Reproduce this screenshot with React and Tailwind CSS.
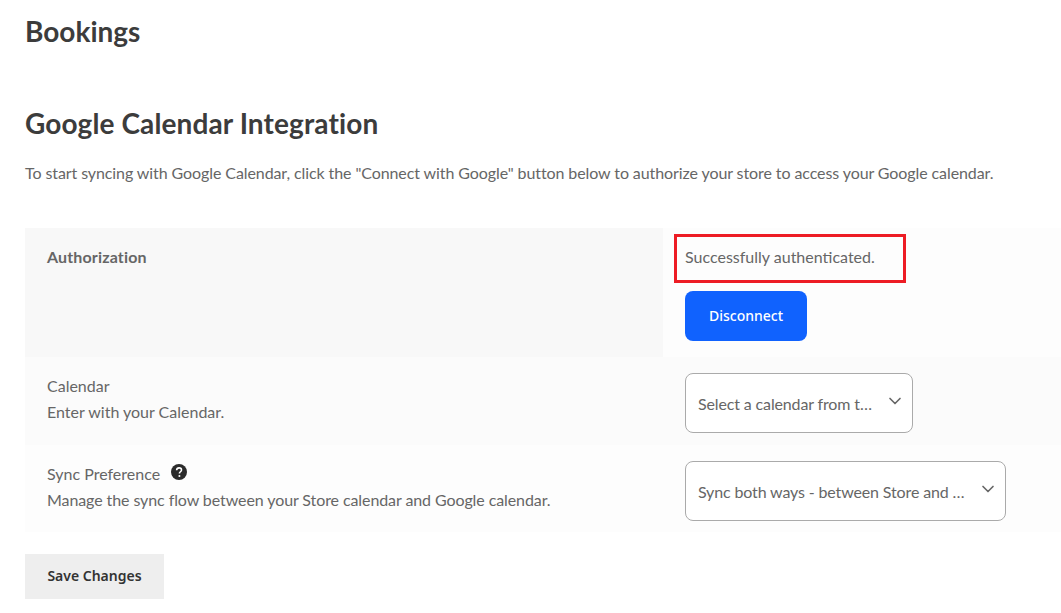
import React from "react";
import { ChevronDown } from "lucide-react";

const Dropdown = ({ label, width }) => (
  <div className={`${width} h-[60px] flex items-center justify-between bg-white border border-[#aaaaaa] rounded-lg pl-3 pr-[7px]`}>
    <span className="truncate text-[16px] tracking-[-0.14px] text-[#666666] mt-[2px]">{label}</span>
    <ChevronDown className="w-[20px] h-[20px] text-[#666666] shrink-0 ml-[6px] -mt-[5px]" strokeWidth={2} />
  </div>
);

const HelpIcon = () => (
  <svg viewBox="0 0 16 16" className="w-[16px] h-[16px] -mt-[5px]">
    <circle cx="8" cy="8" r="8" fill="#2b2b2b" />
    <path d="M5.6 6.2c.1-1.5 1.1-2.3 2.5-2.3 1.4 0 2.4.8 2.4 2 0 .9-.5 1.4-1.2 1.9-.6.4-.8.7-.8 1.3v.3" fill="none" stroke="#ffffff" strokeWidth="1.6" />
    <circle cx="8.4" cy="12" r="1.05" fill="#ffffff" />
  </svg>
);

export default function App() {
  return (
    <div className="min-h-[613px] bg-white pl-[25px] font-['Lato','Liberation_Sans',sans-serif] text-[#666666] relative overflow-hidden">
      <h1 className="text-[28px] leading-[34px] font-bold text-[#3c3c3c] pt-[14px]">Bookings</h1>

      <h2 className="text-[28px] leading-[34px] font-bold tracking-[0.11px] text-[#3c3c3c] mt-[58px]">Google Calendar Integration</h2>
      <p className="text-[16px] leading-[22px] tracking-[-0.09px] mt-[22px]">
        To start syncing with Google Calendar, click the "Connect with Google" button below to authorize your store to access your Google calendar.
      </p>

      {/* Settings table */}
      <div className="mt-[44px] text-[16px] leading-[26px]">
        <div className="flex h-[129px] bg-[#fdfdfd]">
          <div className="w-[638px] bg-[#f8f8f8] pl-[22px] pt-4 font-bold tracking-[0.15px]">Authorization</div>
          <div className="pl-[22px] pt-4">
            <p>Successfully authenticated.</p>
            <button className="mt-[21px] w-[122px] h-[50px] rounded-lg bg-[#1062fe] text-white text-[14px] font-medium font-['Noto_Sans','Open_Sans',sans-serif]">
              Disconnect
            </button>
          </div>
        </div>

        <div className="flex h-[88px] bg-[#fbfbfb]">
          <div className="w-[638px] pl-[22px] pt-4">
            <p>Calendar</p>
            <p>Enter with your Calendar.</p>
          </div>
          <div className="pl-[22px] pt-4">
            <Dropdown label="Select a calendar from the list" width="w-[228px]" />
          </div>
        </div>

        <div className="flex h-[87px] bg-[#fdfdfd]">
          <div className="w-[638px] pl-[22px] pt-4">
            <p className="flex items-center gap-[11px]">
              Sync Preference
              <HelpIcon />
            </p>
            <p className="tracking-[-0.09px]">Manage the sync flow between your Store calendar and Google calendar.</p>
          </div>
          <div className="pl-[22px] pt-4">
            <Dropdown label="Sync both ways - between Store and Google" width="w-[321px]" />
          </div>
        </div>
      </div>

      <button className="mt-[22px] w-[139px] h-[45px] pb-[2px] bg-[#eeeeee] text-[14px] font-semibold text-[#333333] font-['Noto_Sans','Open_Sans',sans-serif]">
        Save Changes
      </button>

      {/* Red annotation box drawn over the screenshot */}
      <div className="absolute left-[674px] top-[234px] w-[232px] h-[49px] border-[3px] border-[#ed1c24]" />
    </div>
  );
}
